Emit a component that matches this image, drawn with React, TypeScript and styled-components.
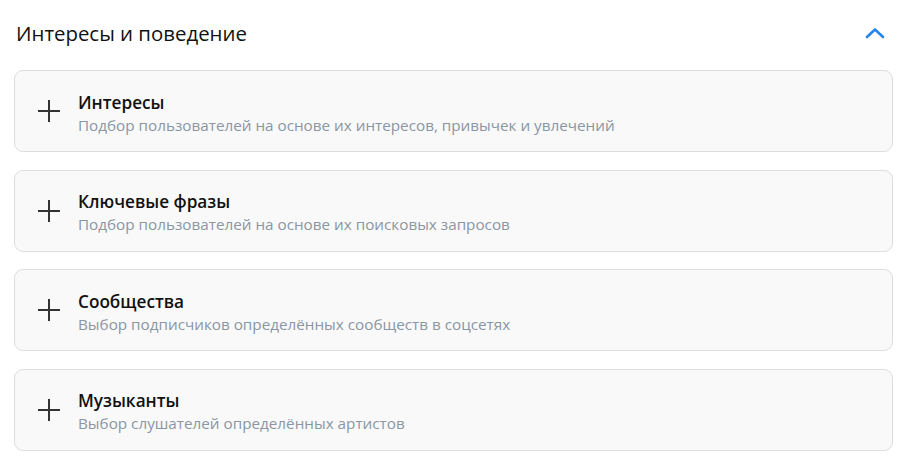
import styled, { createGlobalStyle } from "styled-components";

const GlobalStyle = createGlobalStyle`
  body {
    margin: 0;
    background: #ffffff;
    font-family: "Open Sans", "Noto Sans", sans-serif;
  }
`;

const Section = styled.section`
  display: flex;
  flex-direction: column;
  padding: 0 16px 0 14px;
`;

const Header = styled.div`
  display: flex;
  align-items: center;
  justify-content: space-between;
  height: 66px;
  padding: 0 8px 0 2px;
`;

const Title = styled.h2`
  margin: 0;
  font-size: 20.4px;
  font-weight: 500;
  color: #111111;
`;

const Toggle = styled.button`
  display: flex;
  align-items: center;
  justify-content: center;
  padding: 0;
  border: none;
  background: none;
  cursor: pointer;
`;

const List = styled.div`
  display: flex;
  flex-direction: column;
  gap: 17.6px;
  padding-top: 4px;
`;

const Card = styled.div`
  display: flex;
  align-items: center;
  gap: 18px;
  height: 80px;
  padding: 0 23px;
  border: 1px solid #dddddd;
  border-radius: 9px;
  background: #f9f9f9;
  cursor: pointer;
`;

const Texts = styled.div`
  display: flex;
  flex-direction: column;
  padding-top: 3px;
`;

const CardTitle = styled.div`
  font-size: 17.2px;
  font-weight: 600;
  line-height: 24px;
  color: #111111;
`;

const CardText = styled.div`
  font-size: 15.25px;
  line-height: 20px;
  color: #8a96a3;
`;

const items = [
  { title: "Интересы", text: "Подбор пользователей на основе их интересов, привычек и увлечений" },
  { title: "Ключевые фразы", text: "Подбор пользователей на основе их поисковых запросов" },
  { title: "Сообщества", text: "Выбор подписчиков определённых сообществ в соцсетях" },
  { title: "Музыканты", text: "Выбор слушателей определённых артистов" },
];

const PlusIcon = () => (
  <svg width="22" height="22" viewBox="0 0 22 22" fill="none">
    <path d="M11 0v22M0 11h22" stroke="#333333" strokeWidth="2" />
  </svg>
);

const ChevronUp = () => (
  <svg width="20" height="12" viewBox="0 0 20 12" fill="none">
    <path d="M2 10l8-7.5 8 7.5" stroke="#2585ec" strokeWidth="2.6" strokeLinecap="round" strokeLinejoin="round" />
  </svg>
);

export default function App() {
  return (
    <>
      <GlobalStyle />
      <Section>
        <Header>
          <Title>Интересы и поведение</Title>
          <Toggle aria-label="Свернуть">
            <ChevronUp />
          </Toggle>
        </Header>
        <List>
          {items.map((item) => (
            <Card key={item.title}>
              <PlusIcon />
              <Texts>
                <CardTitle>{item.title}</CardTitle>
                <CardText>{item.text}</CardText>
              </Texts>
            </Card>
          ))}
        </List>
      </Section>
    </>
  );
}
